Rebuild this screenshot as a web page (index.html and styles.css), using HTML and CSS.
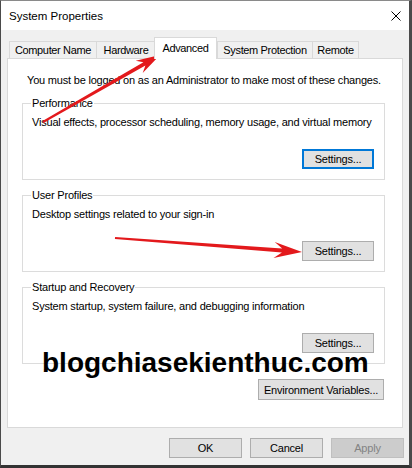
FILE: index.html
```
<!DOCTYPE html>
<html lang="en">
<head>
    <meta charset="UTF-8">
    <title>System Properties</title>
    <link rel="stylesheet" href="styles.css">
</head>
<body>
    <div class="window">
        <div class="titlebar">
            <span class="title">System Properties</span>
            <svg class="close" width="10" height="10" viewBox="0 0 10 10">
                <path d="M0.5 0.5 L9.5 9.5 M9.5 0.5 L0.5 9.5" stroke="#000" stroke-width="1" fill="none"/>
            </svg>
        </div>

        <div class="content">
            <div class="tabs">
                <div class="tab tab-name">Computer Name</div>
                <div class="tab tab-hw">Hardware</div>
                <div class="tab active">Advanced</div>
                <div class="tab tab-sp">System Protection</div>
                <div class="tab tab-remote">Remote</div>
            </div>

            <div class="panel">
                <p class="intro">You must be logged on as an Administrator to make most of these changes.</p>

                <fieldset class="group">
                    <legend>Performance</legend>
                    <p>Visual effects, processor scheduling, memory usage, and virtual memory</p>
                    <div class="row"><button class="btn focused">Settings...</button></div>
                </fieldset>

                <fieldset class="group">
                    <legend>User Profiles</legend>
                    <p>Desktop settings related to your sign-in</p>
                    <div class="row"><button class="btn">Settings...</button></div>
                </fieldset>

                <fieldset class="group">
                    <legend>Startup and Recovery</legend>
                    <p>System startup, system failure, and debugging information</p>
                    <div class="row"><button class="btn">Settings...</button></div>
                </fieldset>

                <div class="row env"><button class="btn wide">Environment Variables...</button></div>
            </div>

            <div class="actions">
                <button class="btn dialog">OK</button>
                <button class="btn dialog">Cancel</button>
                <button class="btn dialog" disabled>Apply</button>
            </div>
        </div>

        <div class="watermark">blogchiasekienthuc.com</div>

        <!-- red annotation arrows -->
        <svg class="arrows" width="412" height="468" viewBox="0 0 412 468">
            <polygon fill="#e3191c" points="43.5,122.9 145.4,65.6 142.7,73 160,55 135.7,60.8 143.4,62.2 42.5,121.1"/>
            <polygon fill="#e3191c" points="114.9,239 281.9,252.5 273.5,257.9 302,252 274.7,241.9 282.2,248.5 115.1,237"/>
        </svg>
    </div>
</body>
</html>
```
FILE: styles.css
```
* {
    box-sizing: border-box;
}
body {
    margin: 0;
    background: #3c3c3c;
    font-family: "Liberation Sans", Arial, sans-serif;
    font-size: 11px;
    letter-spacing: -0.2px;
    color: #000;
}
.window {
    position: relative;
    width: 412px;
    height: 468px;
    display: flex;
    flex-direction: column;
    border-top: 1px solid #8a8a8a;
    border-left: 1px solid #4a4a4a;
    border-right: 3px solid #4a4a4a;
    border-bottom: 3px solid #333;
    background: #f0f0f0;
}
.titlebar {
    height: 29px;
    background: #fff;
    display: flex;
    align-items: center;
    justify-content: space-between;
    padding: 0 8px 0 8px;
}
.title {
    font-size: 11.5px;
    letter-spacing: 0;
}
.close {
    display: block;
}
.content {
    flex: 1;
    padding: 7px 6px 0 6px;
}
.tabs {
    display: flex;
    align-items: flex-end;
    height: 21px;
    padding-left: 2px;
}
.tab {
    height: 17px;
    line-height: 16px;
    padding: 0;
    text-align: center;
    border: 1px solid #d9d9d9;
    border-bottom: none;
    margin-right: -1px;
    background: #f0f0f0;
    white-space: nowrap;
    letter-spacing: -0.35px;
}
.tab-name {
    width: 88px;
}
.tab-hw {
    width: 60px;
}
.tab-sp {
    width: 96px;
}
.tab-remote {
    width: 47px;
}
.tab.active {
    position: relative;
    z-index: 1;
    width: 63px;
    height: 22px;
    line-height: 20px;
    margin: 0 0 -1px -1px;
    background: #fff;
}
.panel {
    height: 370px;
    background: #fff;
    border: 1px solid #d9d9d9;
    padding: 14px 17px 0 14px;
}
p {
    margin: 0;
    line-height: 14px;
}
.intro {
    padding-left: 5px;
}
.group {
    margin: 9px 0 0 0;
    padding: 5px 10px 10px 9px;
    border: 1px solid #dcdcdc;
}
.group + .group {
    margin-top: 8px;
}
.group legend {
    padding: 0 1px;
    margin-left: -1px;
    line-height: 14px;
}
.row {
    display: flex;
    justify-content: flex-end;
}
.group .row {
    margin-top: 20px;
}
.btn {
    font-family: inherit;
    font-size: 11px;
    letter-spacing: -0.2px;
    color: #000;
    height: 20px;
    width: 72px;
    padding: 0;
    background: #e1e1e1;
    border: 1px solid #adadad;
}
.btn.focused {
    border: 2px solid #0078d7;
}
.env {
    margin-top: 15px;
    padding-right: 1px;
}
.btn.wide {
    width: 126px;
    height: 21px;
}
.actions {
    display: flex;
    justify-content: flex-end;
    gap: 8px;
    margin-top: 10px;
    margin-right: -1px;
}
.btn.dialog {
    width: 73px;
}
.btn:disabled {
    background: #cccccc;
    border-color: #bfbfbf;
    color: #838383;
}
.watermark {
    position: absolute;
    left: 41px;
    top: 348px;
    font-size: 28px;
    line-height: 28px;
    font-weight: bold;
    letter-spacing: 0;
    color: #000;
}
.arrows {
    position: absolute;
    left: -1px;
    top: -1px;
    pointer-events: none;
}
```
